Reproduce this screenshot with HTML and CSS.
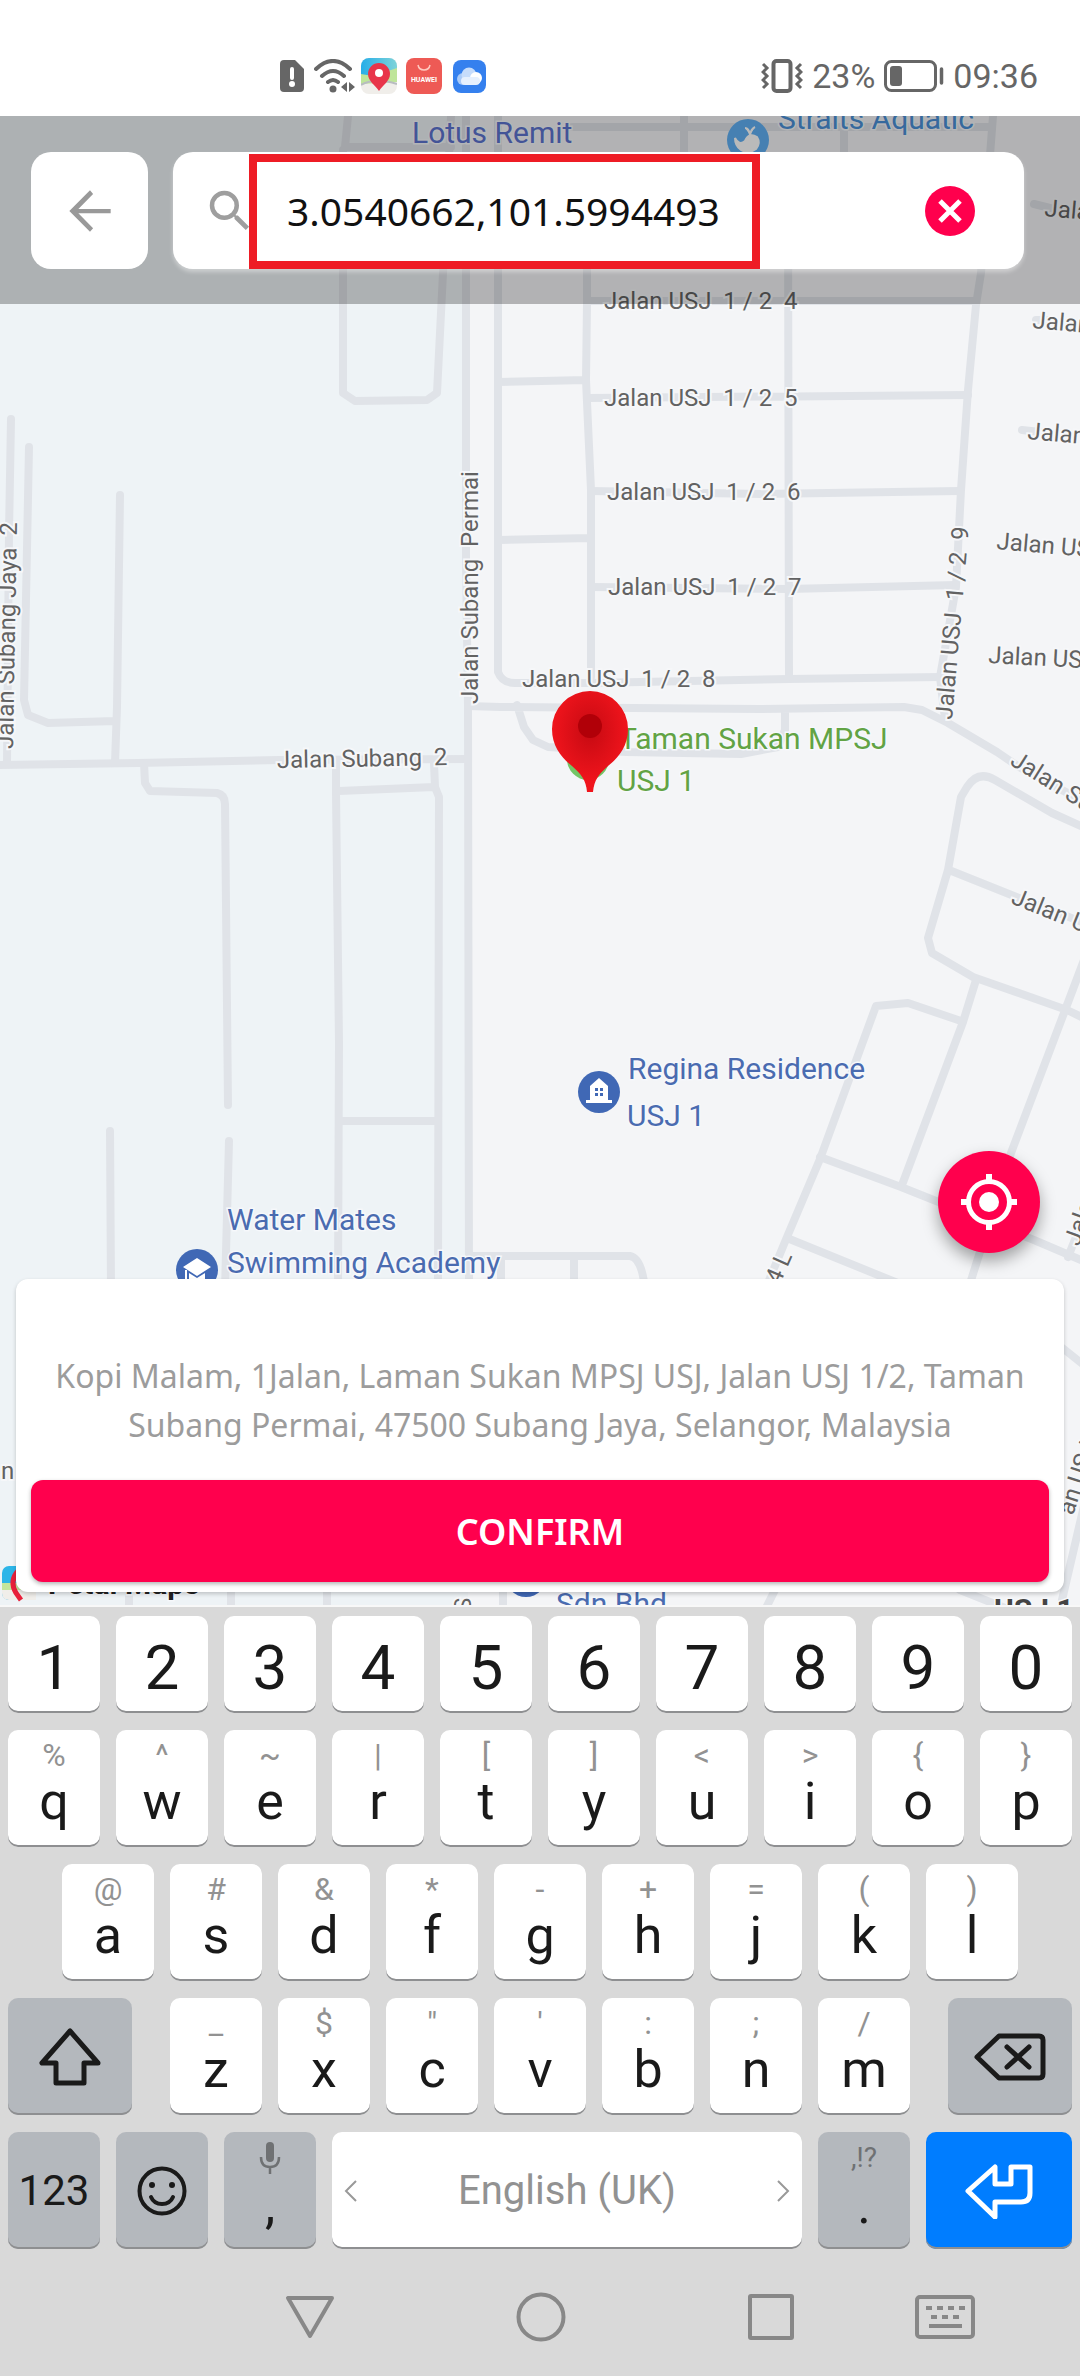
FILE: index.html
```html
<!DOCTYPE html>
<html lang="en">
<head>
<meta charset="utf-8">
<meta name="viewport" content="width=device-width, initial-scale=1">
<title>Choose location</title>
<link rel="stylesheet" href="styles.css">
</head>
<body>
<header class="status">
  <div class="status-left">
    <svg width="24" height="32" viewBox="0 0 24 32"><path fill="#666" d="M4 0h11l9 9v19a4 4 0 0 1-4 4H4a4 4 0 0 1-4-4V4a4 4 0 0 1 4-4z"/><path d="M12 9v9" stroke="#fff" stroke-width="4" stroke-linecap="round"/><circle cx="12" cy="24" r="3" fill="#fff"/></svg>
    <svg class="wifi" width="41" height="34" viewBox="0 0 41 34" fill="none" stroke="#666" stroke-width="4" stroke-linecap="round"><path d="M2 10Q19-6 36 10M8 17q11-10 22 0M14 23q5-4 10 0"/><circle cx="19" cy="30" r="3.5" fill="#666" stroke="none"/><path fill="#666" stroke="none" d="M33 23v10l-6-5zM35 23v10l6-5z"/></svg>
    <svg class="app-maps" width="36" height="36" viewBox="0 0 36 36"><defs><clipPath id="r1"><rect width="36" height="36" rx="8"/></clipPath><linearGradient id="sky" x2="1" y2="0"><stop stop-color="#27aee8"/><stop offset="1" stop-color="#7ed3d9"/></linearGradient></defs><g clip-path="url(#r1)"><path fill="#f0eeea" d="M0 0h36v36H0z"/><path fill="url(#sky)" d="M0 0h36v12L0 22z"/><path fill="#bfe59a" d="M0 16l12 2 24-8v14L0 26z"/><path d="M0 27q14-8 36-1" fill="none" stroke="#b8bcc0" stroke-width="2"/></g><path fill="#e8354a" d="M18 5a11 11 0 0 1 11 11c0 7-7 11-11 17C14 27 7 23 7 16A11 11 0 0 1 18 5z"/><circle cx="18" cy="15" r="4" fill="#fff"/></svg>
    <svg class="app-store" width="36" height="36" viewBox="0 0 36 36"><rect width="36" height="36" rx="8" fill="#ee5a55"/><path d="M12 7q1 5 6 5t6-5" fill="none" stroke="#ffc9bf" stroke-width="1.5"/><text x="18" y="24" class="tiny">HUAWEI</text></svg>
    <svg class="app-cloud" width="33" height="33" viewBox="0 0 33 33"><rect width="33" height="33" rx="8" fill="#3580ee"/><circle cx="10" cy="19" r="6" fill="#a9caf8"/><circle cx="16" cy="15" r="7.500" fill="#c6dcfb"/><circle cx="23" cy="18" r="6" fill="#fff"/><rect x="8" y="17" width="19" height="8" rx="4" fill="#e6f0fe"/></svg>
  </div>
  <div class="status-right">
    <svg width="42" height="34" viewBox="0 0 42 34" fill="none" stroke="#666" stroke-width="3"><rect x="12.500" y="2" width="17" height="30" rx="3" stroke-width="4"/><path d="M2 5l4 4-4 4 4 4-4 4 4 4-4 4M40 5l-4 4 4 4-4 4 4 4-4 4 4 4"/></svg>
    <span>23%</span>
    <svg class="battery" width="60" height="32" viewBox="0 0 60 32"><rect x="1.500" y="1.500" width="50" height="29" rx="6" fill="none" stroke="#666" stroke-width="3"/><rect x="6" y="6" width="12" height="20" rx="3" fill="#666"/><path d="M57.500 9v14" stroke="#666" stroke-width="3.500" stroke-linecap="round"/></svg>
    <time>09:36</time>
  </div>
</header>

<main class="map">
  <svg class="map-canvas" viewBox="0 116 1080 1491" preserveAspectRatio="xMidYMin slice" role="img" aria-label="Street map of USJ 1, Subang Jaya">
    <defs><radialGradient id="pin" cx=".5" cy=".4" r=".5"><stop stop-color="#c60a12"/><stop offset="1" stop-color="#f0141c"/></radialGradient></defs>
    <rect y="116" width="1080" height="1500" fill="#f4f5f7"/>
    <rect y="116" width="468" height="1500" fill="#eef3f6"/>
    <g class="roads">
      <path d="M11 419L9 533 7 763M29 447L24 700 28 715 48 723 115 721M120 495L117 707 115 763M0 765L138 763 279 760 468 759"/>
      <path d="M144 763L145 783 150 791 217 793Q225 795 225 804L228 1105M229 1141L225 1290M110 1131L111 1290"/>
      <path d="M336 763V793L339 1043 338 1290M339 791L434 787M434 763L435 787 439 797 438 1290M339 1121H437"/>
      <path d="M466 116V560L468 706 469 1290M498 116V672Q502 683 515 683L591 683 789 679 941 677"/>
      <path d="M348 116L345 147H451M343 150V393L355 401 427 400 437 393 443 273 451 116"/>
      <path d="M572 127H992M684 116V200M844 127V200M587 200V303L586 380 591 490V677M499 382L586 380M499 540L590 538"/>
      <path d="M788 200L789 677M588 301L975 301M588 398L968 395M591 491L761 494 959 491M591 587L788 589 956 585"/>
      <path d="M993 116L981 273 976 305 968 390 961 490 956 587 940 677 945 719"/>
      <path d="M468 706L500 707 759 709 904 707 922 710 948 723 997 752 1019 767 1090 805M517 705L524 727 533 740 548 747 626 752 741 754 778 747 785 730V710"/>
      <path d="M1090 830L1052 813 995 780Q978 770 967 787L961 797 948 870 928 938 932 953 973 977 1067 1010 1090 1021M949 870L1019 898 1090 925"/>
      <path d="M976 980L963 1022 902 1185M961 1021L908 1003 876 1006 820 1159 787 1237 765 1290M820 1157L901 1187 1034 1240 1090 1264M787 1238L910 1288M1084 960L1064 1013 1011 1153 968 1290M1068 1257L1082 1222"/>
      <path d="M473 1256H630Q642 1258 645 1290M501 1258V1290M574 1258V1290M1060 1346L1090 1370M1062 1600L1090 1480M129 1580V1610M231 1580V1610M327 1580V1610M503 1580V1610M780 1580L765 1610M960 1590L1010 1610"/>
      <path d="M1036 320H1050M1022 430L1040 432M1034 204L1050 208"/>
    </g>
    <g class="street">
      <text x="604" y="309">Jalan USJ  1 / 2  4</text>
      <text x="604" y="406">Jalan USJ  1 / 2  5</text>
      <text x="607" y="500">Jalan USJ  1 / 2  6</text>
      <text x="608" y="595">Jalan USJ  1 / 2  7</text>
      <text x="522" y="687">Jalan USJ  1 / 2  8</text>
      <text x="277" y="768" transform="rotate(-1 277 768)">Jalan Subang  2</text>
      <text transform="translate(478 704) rotate(-90)">Jalan Subang  Permai</text>
      <text transform="translate(13 749) rotate(-89)">Jalan Subang Jaya  2</text>
      <text transform="translate(952 720) rotate(-85)">Jalan USJ  1 / 2  9</text>
      <text transform="translate(1044 216) rotate(5)">Jalan USJ</text>
      <text transform="translate(1032 328) rotate(5)">Jalan USJ</text>
      <text transform="translate(1027 439) rotate(5)">Jalan USJ</text>
      <text transform="translate(996 549) rotate(5)">Jalan USJ</text>
      <text transform="translate(988 663) rotate(3)">Jalan USJ</text>
      <text transform="translate(1009 764) rotate(32)">Jalan Subang</text>
      <text transform="translate(1010 903) rotate(22)">Jalan USJ</text>
      <text transform="translate(773 1300) rotate(-66)">/ 4 L</text>
      <text transform="translate(1079 1247) rotate(-70)">Jalan</text>
      <text transform="translate(1073 1516) rotate(-72)">an USJ</text>
      <text x="1" y="1479">n</text>
      <text transform="translate(471 1612) rotate(-90)">S</text>
    </g>
    <circle cx="748" cy="140" r="21" fill="#60b0f4"/>
    <path d="M735 138q4 8 10 3 4-9 12-4 4 6-1 12-8 6-15 1-6-4-6-12zM750 135q-1-7-5-7m5 7q1-6 5-8" fill="#fff" stroke="#fff" stroke-width="2"/>
    <circle cx="588" cy="759" r="21" fill="#73c566"/>
    <circle cx="599" cy="1092" r="21" fill="#4068b5"/>
    <path fill="#fff" d="M599 1078l9 8v14h4v3h-26v-3h4v-14z"/><path fill="#4068b5" d="M595 1088h3v3h-3zm5 0h3v3h-3zm-5 5h3v3h-3zm5 0h3v3h-3z"/>
    <circle cx="197" cy="1270" r="21" fill="#4068b5"/>
    <path fill="#fff" d="M183 1267l14-9 14 9-14 9zM185 1270h2v10h-2zM189 1273l8 5 8-5v9h-16z"/>
    <circle cx="526" cy="1576" r="21" fill="#4068b5"/>
    <g class="place">
      <text x="412" y="143" class="lotus">Lotus Remit</text>
      <text x="778" y="129" class="aqua">Straits Aquatic</text>
      <text x="619" y="749" class="park">Taman Sukan MPSJ</text>
      <text x="617" y="791" class="park">USJ 1</text>
      <text x="628" y="1079">Regina Residence</text>
      <text x="627" y="1126">USJ 1</text>
      <text x="227" y="1230">Water Mates</text>
      <text x="227" y="1273">Swimming Academy</text>
      <text x="556" y="1614">Sdn Bhd</text>
      <text x="48" y="1594" class="brand">Petal Maps</text>
      <text x="994" y="1620" class="area">USJ 1</text>
    </g>
    <rect x="2" y="1566" width="34" height="34" rx="7" fill="#2cb5e8"/><path fill="#c3e59c" d="M2 1583h30v8H2z"/><path fill="#f0eeea" d="M2 1590h34v10H9q-7 0-7-7z"/><path fill="none" stroke="#e8203a" stroke-width="5" d="M18 1571q-9 10-2 22l5 7"/>
    <path fill="url(#pin)" d="M590 691a38 38 0 0 1 38 38c0 18-10 29-20 37-9 8-14 14-15 26h-6c-1-12-6-18-15-26-10-8-20-19-20-37a38 38 0 0 1 38-38z"/>
    <circle cx="590" cy="726" r="12" fill="#b10008"/>
  </svg>

  <form class="search-bar">
    <button type="button" class="back" aria-label="Back"><svg width="62" height="62" viewBox="0 0 24 24"><path fill="#999" d="M20 11.200H7.500l5.700-5.800L12 4l-8 8 8 8 1.200-1.300-5.700-5.800H20z"/></svg></button>
    <div class="search-box">
      <svg class="lens" width="54" height="54" viewBox="0 0 24 24"><path fill="#9e9e9e" d="M15.500 14h-.79l-.28-.27A6.470 6.470 0 0 0 16 9.500 6.500 6.500 0 1 0 9.500 16c1.610 0 3.090-.59 4.230-1.570l.27.280v.79l5 4.990L20.490 19zm-6 0a4.500 4.500 0 1 1 0-9 4.500 4.500 0 0 1 0 9z"/></svg>
      <span class="highlight"></span>
      <input type="text" aria-label="Search location" value="3.0540662,101.5994493">
      <button type="button" class="clear" aria-label="Clear"><svg width="50" height="50" viewBox="0 0 50 50"><circle cx="25" cy="25" r="25" fill="#ff004d"/><path d="M15 15l20 20M35 15L15 35" stroke="#fff" stroke-width="5"/></svg></button>
    </div>
  </form>

  <div class="bottom">
    <button type="button" class="locate" aria-label="My location"><svg width="58" height="58" viewBox="0 0 58 58"><circle cx="29" cy="29" r="20.500" fill="none" stroke="#fff" stroke-width="5"/><circle cx="29" cy="29" r="10" fill="#fff"/><path d="M29 1v8M29 49v8M1 29h8M49 29h8" stroke="#fff" stroke-width="6"/></svg></button>
    <section class="card">
      <p>Kopi Malam, 1Jalan, Laman Sukan MPSJ USJ, Jalan USJ 1/2, Taman Subang Permai, 47500 Subang Jaya, Selangor, Malaysia</p>
      <button type="button" class="confirm">CONFIRM</button>
    </section>
  </div>
</main>

<section class="keyboard" aria-label="Keyboard">
  <div class="row digits">
    <button class="key">1</button><button class="key">2</button><button class="key">3</button><button class="key">4</button><button class="key">5</button><button class="key">6</button><button class="key">7</button><button class="key">8</button><button class="key">9</button><button class="key">0</button>
  </div>
  <div class="row">
    <button class="key"><small>%</small>q</button><button class="key"><small>^</small>w</button><button class="key"><small>~</small>e</button><button class="key"><small>|</small>r</button><button class="key"><small>[</small>t</button><button class="key"><small>]</small>y</button><button class="key"><small>&lt;</small>u</button><button class="key"><small>&gt;</small>i</button><button class="key"><small>{</small>o</button><button class="key"><small>}</small>p</button>
  </div>
  <div class="row row-home">
    <button class="key"><small>@</small>a</button><button class="key"><small>#</small>s</button><button class="key"><small>&amp;</small>d</button><button class="key"><small>*</small>f</button><button class="key"><small>-</small>g</button><button class="key"><small>+</small>h</button><button class="key"><small>=</small>j</button><button class="key"><small>(</small>k</button><button class="key"><small>)</small>l</button>
  </div>
  <div class="row">
    <button class="key dark shift" aria-label="Shift"><svg width="64" height="60" viewBox="0 0 64 60" fill="none" stroke="#1a1a1a" stroke-width="5" stroke-linejoin="round"><path d="M32 4L4 36h14v20h28V36h14z"/></svg></button><button class="key"><small>_</small>z</button><button class="key"><small>$</small>x</button><button class="key"><small>"</small>c</button><button class="key"><small>'</small>v</button><button class="key"><small>:</small>b</button><button class="key"><small>;</small>n</button><button class="key"><small>/</small>m</button><button class="key dark delete" aria-label="Delete"><svg width="74" height="50" viewBox="0 0 74 50" fill="none" stroke="#1a1a1a" stroke-width="5" stroke-linejoin="round" stroke-linecap="round"><path d="M26 4h40q4 0 4 4v34q0 4-4 4H26L4 25zM34 15l22 20M56 15L34 35"/></svg></button>
  </div>
  <div class="row">
    <button class="key dark mode">123</button>
    <button class="key dark centered" aria-label="Emoji"><svg width="50" height="50" viewBox="0 0 50 50" fill="none" stroke="#1a1a1a" stroke-width="4" stroke-linecap="round"><circle cx="25" cy="25" r="22.500"/><path d="M14 31q3 7 11 7t11-7"/><circle cx="15" cy="19" r="3" fill="#1a1a1a" stroke="none"/><circle cx="35" cy="19" r="3" fill="#1a1a1a" stroke="none"/></svg></button>
    <button class="key dark punct"><svg width="22" height="32" viewBox="0 0 22 32"><rect x="7" y="0" width="8" height="20" rx="4" fill="#6f7173"/><path d="M2 15q0 10 9 10t9-10M11 25v7" fill="none" stroke="#6f7173" stroke-width="2.500"/></svg>,</button>
    <button class="key space"><svg width="14" height="22" viewBox="0 0 14 22"><path d="M12 1L2 11l10 10" fill="none" stroke="#999" stroke-width="2"/></svg><span>English (UK)</span><svg width="14" height="22" viewBox="0 0 14 22"><path d="M2 1l10 10L2 21" fill="none" stroke="#999" stroke-width="2"/></svg></button>
    <button class="key dark punct"><small>,!?</small>.</button>
    <button class="key enter" aria-label="Enter"><svg width="68" height="56" viewBox="0 0 68 56" fill="none" stroke="#fff" stroke-width="5" stroke-linejoin="round"><path d="M3 28L30 4v17h16V4h19v26q0 9-9 9H30v15z"/></svg></button>
  </div>
  <nav class="nav">
    <button aria-label="Back"><svg width="50" height="50" viewBox="0 0 50 50"><path d="M3 6h44L25 44z" fill="none" stroke="#888" stroke-width="4" stroke-linejoin="round"/></svg></button>
    <button aria-label="Home"><svg width="50" height="50" viewBox="0 0 50 50"><circle cx="25" cy="25" r="22.500" fill="none" stroke="#888" stroke-width="4"/></svg></button>
    <button aria-label="Recent apps"><svg width="50" height="50" viewBox="0 0 50 50"><rect x="4" y="4" width="42" height="42" rx="1" fill="none" stroke="#888" stroke-width="4"/></svg></button>
    <button aria-label="Switch keyboard"><svg width="60" height="50" viewBox="0 0 60 50"><rect x="2" y="5" width="56" height="40" rx="3" fill="none" stroke="#888" stroke-width="4"/><path d="M11 16h40" stroke="#888" stroke-width="4" stroke-dasharray="6 5"/><path d="M16 25h30" stroke="#888" stroke-width="4" stroke-dasharray="6 5"/><path d="M14 34h33" stroke="#888" stroke-width="4"/></svg></button>
  </nav>
</section>
</body>
</html>
```
FILE: styles.css
```css
* { box-sizing: border-box; }
body {
  margin: 0;
  min-height: 100vh;
  display: flex;
  flex-direction: column;
  background: #fff;
  font-family: Roboto, sans-serif;
}
button {
  margin: 0;
  padding: 0;
  border: 0;
  background: none;
  font-family: inherit;
  color: inherit;
  cursor: pointer;
}
svg { display: block; flex: none; }

/* status bar */
.status {
  height: 116px;
  padding: 36px 42px 0 280px;
  display: flex;
  justify-content: space-between;
  align-items: center;
  color: #666;
  font-size: 34px;
}
.status-left, .status-right { display: flex; align-items: center; }
.wifi { margin-left: 10px; }
.app-maps { margin-left: 6px; }
.app-store { margin-left: 9px; }
.app-cloud { margin-left: 11px; }
.status-right { gap: 9px; line-height: 40px; }
.tiny { font: 700 7px Roboto, sans-serif; fill: #fff; text-anchor: middle; }

/* map */
.map {
  position: relative;
  flex: 1;
  min-height: 900px;
  display: flex;
  flex-direction: column;
  justify-content: space-between;
  overflow: hidden;
  border-bottom: 2px solid #f8f8f8;
}
.map-canvas { position: absolute; inset: 0; width: 100%; height: 100%; }
.roads path { fill: none; stroke: #e0e3e8; stroke-width: 8; stroke-linecap: round; stroke-linejoin: round; }
.street text {
  font-size: 24px;
  fill: #626262;
  stroke: #f6f7f9;
  stroke-width: 4px;
  paint-order: stroke;
  white-space: pre;
}
.place text {
  font-size: 30px;
  fill: #4a6bb0;
  stroke: #f6f8fb;
  stroke-width: 3px;
  paint-order: stroke;
}
.place .lotus { fill: #5d74d0; }
.place .aqua { fill: #4a90d8; }
.place .park { fill: #62a344; }
.place .brand { fill: #222; font-weight: 700; }
.place .area { fill: #444; font-weight: 700; }

/* search */
.search-bar {
  position: relative;
  display: flex;
  gap: 25px;
  padding: 36px 56px 35px 31px;
  background: rgba(0, 0, 0, .27);
}
.back {
  width: 117px;
  height: 117px;
  display: grid;
  place-items: center;
  border-radius: 20px;
  background: #fff;
}
.search-box {
  position: relative;
  flex: 1;
  display: flex;
  align-items: center;
  padding: 0 49px 0 30px;
  border-radius: 20px;
  background: #fff;
  box-shadow: 0 3px 4px rgba(255, 255, 255, .4);
}
.highlight {
  position: absolute;
  left: 76px;
  top: 2px;
  bottom: 0;
  width: 511px;
  border: 8px solid #ee1c25;
  background: #fff;
}
.search-box input {
  position: relative;
  flex: 1;
  min-width: 0;
  margin: 0 0 0 30px;
  padding: 0;
  border: 0;
  outline: 0;
  background: none;
  color: #111;
  font: 39px/60px "Noto Sans", sans-serif;
}

/* location card */
.bottom {
  position: relative;
  display: flex;
  flex-direction: column;
  gap: 26px;
  padding: 0 16px 13px;
}
.locate {
  align-self: flex-end;
  width: 102px;
  height: 102px;
  margin-right: 24px;
  display: grid;
  place-items: center;
  border-radius: 50%;
  background: #ff004d;
  box-shadow: 0 8px 16px rgba(0, 0, 0, .35);
}
.card {
  padding: 72px 15px 10px;
  border-radius: 12px;
  background: #fff;
  box-shadow: 0 2px 4px rgba(0, 0, 0, .2);
}
.card p {
  margin: 0 0 31px;
  color: #9c9c9c;
  text-align: center;
  font: 32px/49px "Noto Sans", sans-serif;
}
.confirm {
  width: 100%;
  height: 102px;
  border-radius: 12px;
  background: #ff004d;
  box-shadow: 0 2px 4px rgba(0, 0, 0, .3);
  color: #fff;
  font: 600 36px "Noto Sans", sans-serif;
}

/* keyboard */
.keyboard {
  display: flex;
  flex-direction: column;
  gap: 17px;
  padding-top: 9px;
  background: #d9d9d9;
}
.row { display: flex; gap: 16px; padding: 0 8px; }
.row-home { padding: 0 62px; }
.key {
  flex: 92 1 0;
  min-width: 0;
  height: 117px;
  display: flex;
  flex-direction: column;
  align-items: center;
  border-radius: 10px;
  background: #fff;
  box-shadow: inset 0 -2px 0 #8e8f91;
  color: #1a1a1a;
  font-size: 52px;
  line-height: 44px;
}
.key small { color: #929292; font-size: 32px; line-height: 50px; }
.digits .key { height: 97px; padding-top: 4px; font-size: 62px; line-height: 95px; }
.dark { background: #b4b8bd; }
.dark small { color: #6f7173; }
.shift, .delete { flex-grow: 124; justify-content: center; }
.shift { margin-right: 22px; }
.delete { margin-left: 22px; }
.centered { justify-content: center; }
.mode { justify-content: center; font-size: 42px; }
.punct { justify-content: space-between; padding: 10px 0 21px; }
.punct small { font-size: 28px; line-height: 32px; }
.space {
  flex-grow: 470;
  flex-direction: row;
  justify-content: space-between;
  color: #929292;
  font-size: 40px;
}
.space svg { margin: 0 12px; }
.enter { flex-grow: 146; justify-content: center; background: #007dff; }
.nav {
  height: 110px;
  display: grid;
  grid-template-columns: 231fr 231fr 229fr 120fr;
  align-items: center;
  padding: 0 75px 8px 194px;
}
.nav button { display: grid; place-items: center; }
```
